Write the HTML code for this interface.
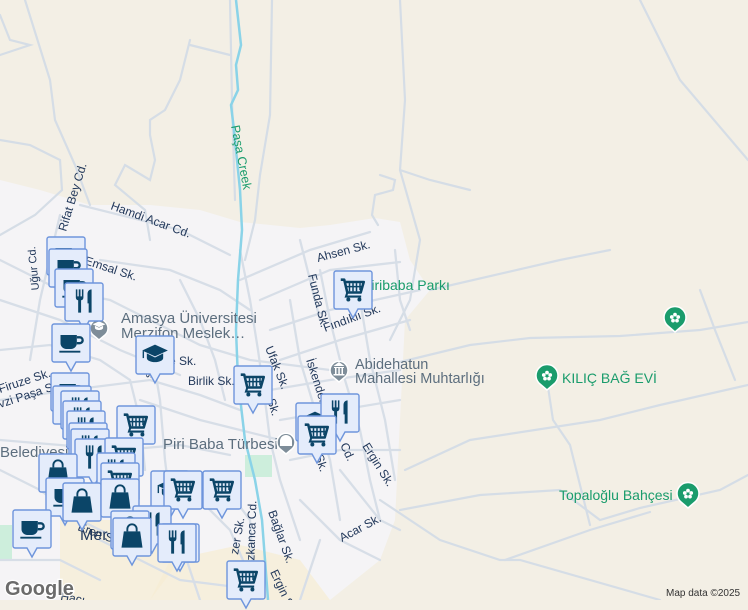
<!DOCTYPE html>
<html><head><meta charset="utf-8">
<style>
html,body{margin:0;padding:0;}
body{width:748px;height:600px;overflow:hidden;position:relative;background:#f3efe5;font-family:"Liberation Sans",sans-serif;}
svg{position:absolute;left:0;top:0;}
.m{position:absolute;width:40px;height:50px;}
.m svg{position:absolute;left:0;top:0}
</style></head><body>
<svg width="748" height="600" viewBox="0 0 748 600">
<defs>
<symbol id="cart" viewBox="0 0 24 24"><path d="M1.5 4h3l2.6 11h11.5l2.6-9H6" fill="none" stroke="#0b4568" stroke-width="2.2" stroke-linejoin="round"/><path d="M9 7v7M12 7v7M15 7v7M18 7v6M6.5 10h14" stroke="#0b4568" stroke-width="1.3"/><path d="M7 15.5l-1 3h13" fill="none" stroke="#0b4568" stroke-width="1.8"/><circle cx="8" cy="21" r="1.7" fill="#0b4568"/><circle cx="17.5" cy="21" r="1.7" fill="#0b4568"/></symbol>
<symbol id="cup" viewBox="0 0 24 24"><path d="M3 6h14v7a5 5 0 0 1-5 5H8a5 5 0 0 1-5-5z" fill="#0b4568"/><path d="M17 8h2.5a2.5 2.5 0 0 1 0 5H17" fill="none" stroke="#0b4568" stroke-width="2"/><rect x="2" y="19.5" width="18" height="1.6" fill="#0b4568"/></symbol>
<symbol id="fork" viewBox="0 0 24 24"><path d="M5 2v7a2.5 2.5 0 0 0 2 2.4V22h2.5V11.4A2.5 2.5 0 0 0 11.5 9V2h-1.3v6H9V2H7.5v6H6.3V2z" fill="#0b4568"/><path d="M15 6c0-2.5 1.5-4 3.5-4v20H16v-8h-1z" fill="#0b4568"/></symbol>
<symbol id="bag" viewBox="0 0 24 24"><path d="M8 8V6a4 4 0 0 1 8 0v2" fill="none" stroke="#0b4568" stroke-width="1.6"/><path d="M5 8h14l2 14H3z" fill="#0b4568"/></symbol>
<symbol id="grad" viewBox="0 0 24 24"><path d="M12 4L1 9l11 5 11-5z" fill="#0b4568"/><path d="M5 11.5v4c0 2 3.5 3.5 7 3.5s7-1.5 7-3.5v-4L12 15z" fill="#0b4568"/><path d="M2 9.5v6" stroke="#0b4568" stroke-width="1.2"/></symbol>
<symbol id="gradw" viewBox="0 0 24 24"><path d="M12 4L1 9l11 5 11-5z" fill="#fff"/><path d="M5 11.5v4c0 2 3.5 3.5 7 3.5s7-1.5 7-3.5v-4L12 15z" fill="#fff"/></symbol>
<symbol id="flower" viewBox="0 0 24 24"><g fill="#fff"><circle cx="12" cy="7" r="2.8"/><circle cx="16.8" cy="10.5" r="2.8"/><circle cx="15" cy="16" r="2.8"/><circle cx="9" cy="16" r="2.8"/><circle cx="7.2" cy="10.5" r="2.8"/></g><circle cx="12" cy="12" r="1.6" fill="#1a9c6c"/></symbol>
</defs>
<path d="M0 180 L40 190 L90 205 L150 205 L200 210 L240 222 L300 228 L330 225 L375 218 L400 222 L410 260 L430 290 L405 320 L400 420 L395 520 L380 560 L330 600 L0 600 Z" fill="#f5f4f6"/>
<path d="M170 560 L240 545 L300 560 L330 600 L150 600 Z" fill="#f7ecd3" opacity=".7"/>
<path d="M60 520 L140 520 L180 560 L150 600 L60 600 Z" fill="#f7ecd3" opacity=".7"/>
<rect x="245" y="455" width="27" height="22" fill="#cdeedc"/>
<rect x="0" y="525" width="12" height="35" fill="#cdeedc"/>
<g fill="none" stroke="#d5dde6" stroke-width="2.2" stroke-linecap="round">
<path d="M25 0 L50 80 L55 120 L75 165 L90 205"/>
<path d="M0 15 L10 40 L30 45 L0 55"/>
<path d="M0 140 L30 145 L60 160 L62 190 L35 215 L0 235"/>
<path d="M272 0 L270 115 L260 175 L255 220 L245 260"/>
<path d="M190 40 L180 80 L165 110 L150 120 L150 135 L155 160 L150 180 L125 165 L115 185 L145 210 L150 240"/>
<path d="M190 45 L230 55"/>
<path d="M230 0 L232 100 L235 200"/>
<path d="M400 0 L405 100 L400 170 L420 240 L410 300 L390 340"/>
<path d="M400 170 L430 180 L470 190"/>
<path d="M380 175 L395 180 L393 190 L375 195 L372 215 L378 225"/>
<path d="M430 290 L560 260 L610 250"/>
<path d="M400 362 L470 345 L530 338 L620 336 L700 330 L748 322"/>
<path d="M548 387 L553 420 L570 445 L590 525"/>
<path d="M405 470 L470 440 L600 420 L660 405 L748 385"/>
<path d="M400 510 L480 495 L560 490 L600 520 L640 508 L720 490 L748 475"/>
<path d="M380 500 L440 540 L500 560 L520 560 L660 600"/>
<path d="M505 560 L590 530 L650 512"/>
<path d="M700 290 L715 330 L735 380"/>
<path d="M640 0 L680 80 L748 160"/>
</g>
<g fill="none" stroke="#d7dee7" stroke-width="2.3" stroke-linecap="round">
<path d="M80 205 L180 230 L230 255"/>
<path d="M60 215 L40 300 L30 360"/>
<path d="M0 260 L60 290 L110 300 L150 320 L200 345 L250 360 L330 370"/>
<path d="M0 300 L60 320 L120 350 L180 375"/>
<path d="M0 350 L50 345 L100 360 L130 380 L140 420 L145 470"/>
<path d="M0 400 L70 390 L150 380 L200 395 L240 410"/>
<path d="M0 440 L60 445 L120 450 L180 445 L230 455"/>
<path d="M0 470 L40 490 L80 520 L120 540"/>
<path d="M150 340 L160 400 L165 460 L170 500"/>
<path d="M180 280 L200 320 L215 360 L225 400"/>
<path d="M240 250 L250 300 L258 350 L265 400 L270 440 L280 480 L300 540"/>
<path d="M240 280 L310 250 L370 232"/>
<path d="M260 300 L330 270 L400 262"/>
<path d="M270 330 L330 310 L420 290"/>
<path d="M280 360 L340 340 L410 320"/>
<path d="M270 390 L330 380 L400 370"/>
<path d="M280 420 L340 410 L400 400"/>
<path d="M290 460 L340 450 L400 450"/>
<path d="M290 300 L300 360 L315 410 L330 460 L340 520"/>
<path d="M320 270 L330 320 L345 380 L360 430 L370 480 L380 520"/>
<path d="M360 300 L370 360 L385 420 L395 480"/>
<path d="M300 240 L310 280 L320 320"/>
<path d="M395 250 L400 300 L410 330"/>
<path d="M340 470 L380 520 L400 530"/>
<path d="M300 500 L340 540 L380 560"/>
<path d="M200 500 L230 530 L260 600"/>
<path d="M180 540 L200 600"/>
<path d="M100 540 L140 560 L180 580 L260 590"/>
<path d="M0 560 L60 560 L100 580"/>
<path d="M220 480 L250 520 L255 600"/>
<path d="M320 540 L300 600"/>
<path d="M140 400 L200 420 L240 430 L280 440"/>
<path d="M100 260 L170 270 L220 290 L250 310"/>
</g>
<path d="M236 0 L241 45 L236 65 L238 90 L231 105 L234 130 L240 190 L242 230 L238 280 L236 330 L238 380 L245 440 L255 480 L262 520 L265 560 L268 600" fill="none" stroke="#8ad3e8" stroke-width="2.5"/>
<g font-size="12" fill="#23395b">
<text transform="translate(231,126) rotate(79)" fill="#1a9c6c" font-size="12.5">Paşa Creek</text>
<text transform="translate(110,209) rotate(20)">Hamdi Acar Cd.</text>
<text transform="translate(66,232) rotate(-73)">Rifat Bey Cd.</text>
<text transform="translate(318,262) rotate(-15)">Ahsen Sk.</text>
<text transform="translate(84,264) rotate(18)">Emsal Sk.</text>
<text transform="translate(39,290) rotate(-95)" font-size="11">Uğur Cd.</text>
<text transform="translate(308,275) rotate(76)">Funda Sk.</text>
<text transform="translate(325,332) rotate(-20)">Fındıklı Sk.</text>
<text transform="translate(265,348) rotate(68)">Ufak Sk.</text>
<text transform="translate(306,360) rotate(72)">İskender</text>
<text x="188" y="385">Birlik Sk.</text>
<text x="163" y="365">ye Sk.</text>
<text transform="translate(0,393) rotate(-18)">Firuze Sk.</text>
<text transform="translate(0,408) rotate(-18)">vzi Paşa Sk.</text>
<text transform="translate(152,378) rotate(-88)" font-size="11">s Cd.</text>
<text transform="translate(267,400) rotate(72)">Sk.</text>
<text transform="translate(315,456) rotate(72)">Sk.</text>
<text transform="translate(340,445) rotate(65)">Cd.</text>
<text transform="translate(362,446) rotate(58)">Ergin Sk.</text>
<text transform="translate(342,542) rotate(-28)">Acar Sk.</text>
<text transform="translate(77,530) rotate(20)">Eren Sk.</text>
<text transform="translate(238,555) rotate(-80)">zer Sk.</text>
<text transform="translate(254,570) rotate(-88)">Özkanca Cd.</text>
<text transform="translate(268,512) rotate(70)">Bağlar Sk.</text>
<text transform="translate(270,572) rotate(65)">Ergin Sk.</text>
<text transform="translate(60,600) rotate(10)">Hacı</text>
<text x="80" y="540" font-size="16">Mer</text>
</g>
<g font-size="15" fill="#5c6e7e">
<text x="121" y="323">Amasya Üniversitesi</text>
<text x="121" y="338">Merzifon Meslek…</text>
<text x="355" y="369" font-size="14.5">Abidehatun</text>
<text x="355" y="383" font-size="14.5">Mahallesi Muhtarlığı</text>
<text x="163" y="449">Piri Baba Türbesi</text>
<text x="0" y="457">Belediyesi</text>
</g>
<g font-size="14" fill="#1a9c6c">
<text x="362" y="290">Piribaba Parkı</text>
<text x="562" y="383">KILIÇ BAĞ EVİ</text>
<text x="559" y="500">Topaloğlu Bahçesi</text>
</g>
<g>
<path d="M105 335 l-6 5 l-6 -5 a9 9 0 1 1 12 0z" fill="#7e8d99" stroke="#fff" stroke-width="1.5"/><use href="#gradw" x="92" y="319" width="14" height="14"/>
<path d="M345 377 l-6 5 l-6 -5 a9 9 0 1 1 12 0z" fill="#7e8d99" stroke="#fff" stroke-width="1.5"/><path d="M334 367h10v1h-10zM335 368v6h1.5v-6zM338.3 368v6h1.5v-6zM341.5 368v6h1.5v-6zM333.5 374h11v1.5h-11zM339 362l5.5 4h-11z" fill="#fff"/>
<path d="M292 449 l-6 5 l-6 -5 a9 9 0 1 1 12 0z" fill="#7e8d99" stroke="#fff" stroke-width="1.5"/><path d="M280 446v-5a6 6 0 0 1 12 0v5zM283 446v-4h1.2v4zM285.5 446v-5h1.2v5zM288 446v-4h1.2v4z" fill="#fff"/>
</g>
<g>
<path d="M682 326 l-7 6 l-7 -6 a11 11 0 1 1 14 0z" fill="#1a9c6c" stroke="#fff" stroke-width="1.5"/><use href="#flower" x="667" y="310" width="16" height="16"/>
<path d="M554 384 l-7 6 l-7 -6 a11 11 0 1 1 14 0z" fill="#1a9c6c" stroke="#fff" stroke-width="1.5"/><use href="#flower" x="539" y="368" width="16" height="16"/>
<path d="M695 502 l-7 6 l-7 -6 a11 11 0 1 1 14 0z" fill="#1a9c6c" stroke="#fff" stroke-width="1.5"/><use href="#flower" x="680" y="486" width="16" height="16"/>
</g>
<text x="666" y="596" font-size="10" fill="#333">Map data ©2025</text>
<text x="5" y="595" font-size="20" font-weight="bold" fill="#6b6b6b" stroke="#fff" stroke-width="2.5" paint-order="stroke">Google</text>
</svg>
<div id="mk"></div>
<script>
var P='M3 1h34a2 2 0 0 1 2 2v34a2 2 0 0 1-2 2h-12l-5 9l-5-9h-12a2 2 0 0 1-2-2v-34a2 2 0 0 1 2-2z';
var L=[
['cup',46,236],['cup',48,248],['cup',54,268],['fork',64,282],['cup',51,323],['grad',135,335],
['cup',50,372],['fork',52,385],['fork',60,390],['fork',62,400],['fork',66,410],['fork',68,422],['fork',70,428],
['cart',116,405],['fork',74,438],['cart',104,437],['fork',96,452],['cart',100,462],
['bag',38,453],['cup',45,477],['bag',62,482],['bag',100,478],['cup',12,509],
['grad',150,470],['cart',163,470],['cart',202,470],['fork',132,505],['bag',110,510],['bag',112,517],['fork',160,523],['fork',157,523],
['cart',226,560],['cart',233,365],['cart',333,270],['grad',295,402],['fork',320,393],['cart',297,415]
];
var h='';
L.forEach(function(m){h+='<div class="m" style="left:'+m[1]+'px;top:'+m[2]+'px"><svg width="40" height="50"><path d="'+P+'" fill="#e4ecfb" stroke="#6e95dc" stroke-width="1.4"/><use href="#'+m[0]+'" x="6" y="5" width="28" height="28"/></svg></div>';});
document.getElementById('mk').innerHTML=h;
</script>
</body></html>
